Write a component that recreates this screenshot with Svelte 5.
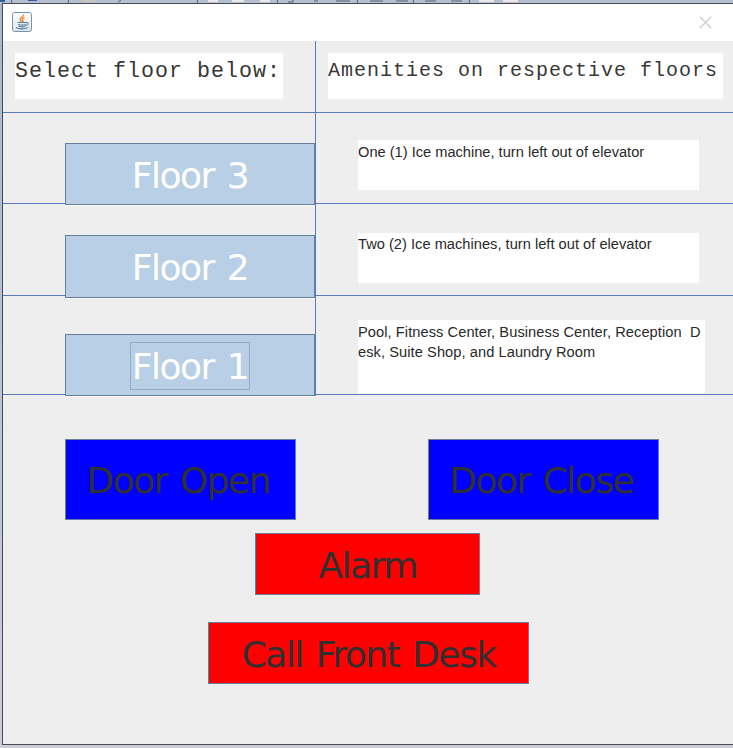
<script>
  const floors = [
    { name: 'Floor 3', key: 'three', text: 'One (1) Ice machine, turn left out of elevator' },
    { name: 'Floor 2', key: 'two', text: 'Two (2) Ice machines, turn left out of elevator' },
    { name: 'Floor 1', key: 'one', text: 'Pool, Fitness Center, Business Center, Reception  D\nesk, Suite Shop, and Laundry Room', focused: true }
  ];
</script>

<div class="desktop">
  <svg class="toolbar" width="733" height="3" viewBox="0 0 733 3" aria-hidden="true">
    <rect width="733" height="3" fill="#b4c0d0" />
    <path d="M0 0h5v2H0zM28 0h9v1h-9z" fill="#315b91" />
    <path d="M82 0h14v2H82z" fill="#c7c6bd" />
    <path d="M118 2l3-2M288 2h5M293 0v2M314 1h4M336 1h14M370 1h13M396 1h12M425 1h11M451 1h11" stroke="#596270" fill="none" />
    <path d="M11.500 0v3M68.500 0v3M197.500 0v3M277.500 0v3M357.500 0v3M413.500 0v3M469.500 0v3" stroke="#566275" />
    <path d="M208 0h10v2h-10zM232 0h12v2h-12zM260 0h10v2h-10zM479 0h15v2h-15zM503 0h15v2h-15z" fill="#eee9e9" />
  </svg>
  <div class="window">
    <header>
      <svg class="java" width="20" height="20" viewBox="0 0 20 20" aria-label="Java">
        <defs><linearGradient id="tile" x2="0" y2="1"><stop stop-color="#fff" /><stop offset="1" stop-color="#dce3e8" /></linearGradient></defs>
        <rect x=".5" y=".5" width="19" height="19" rx="2" fill="url(#tile)" stroke="#7593ad" />
        <path d="M11.500 2.500C12 5 7.500 5.500 8.200 7.500c.2 1 1.300 1.500 1 2.500M12.500 5.500c-2 .8-3 1.900-1.800 3 .7.700.2 1.300-.4 1.600" fill="none" stroke="#ed8b3b" stroke-width="1.500" />
        <path d="M5.500 10.500h8.500M6 12.500q4 1.200 7.500 0M6.500 14.300q3.500 1.200 6.500 0M4 15.800q6 2.200 12-.2M13.800 10.500q3-.2 2 1.700-.7 1-2.500 1.400" fill="none" stroke="#577f9d" stroke-width="1.100" />
      </svg>
      <svg class="close" width="13" height="13" viewBox="0 0 13 13" aria-label="Close"><path d="M.8.8l11.400 11.400M12.200.8L.8 12.200" stroke="#d2ccd3" stroke-width="1.400" /></svg>
    </header>
    <main>
      <section class="row headings">
        <div class="left"><div class="heading select">Select floor below:</div></div>
        <div class="right"><div class="heading amenities">Amenities on respective floors</div></div>
      </section>
      {#each floors as floor}
        <section class="row {floor.key}">
          <div class="left">
            <button class="floor"><span class:focused={floor.focused}>{floor.name}</span></button>
          </div>
          <div class="right"><div class="info">{floor.text}</div></div>
        </section>
      {/each}
      <div class="doors">
        <button class="door">Door Open</button>
        <button class="door">Door Close</button>
      </div>
      <button class="alarm">Alarm</button>
      <button class="desk">Call Front Desk</button>
    </main>
  </div>
</div>

<style>
  :global(body) { margin: 0; overflow: hidden; }
  * { box-sizing: border-box; }
  .desktop { width: 733px; height: 748px; padding-left: 2px; background: linear-gradient(#a8b8cc, #bdc6d4 60%, #cbced6); overflow: hidden; }
  .toolbar { display: block; margin-left: -2px; }
  .window { width: 731px; height: 742px; border: 1px solid #454a55; border-right: 0; background: #eeeeee; }
  header { height: 37px; padding: 8px 21px 0 9px; display: flex; justify-content: space-between; background: #fff; }
  .close { margin-top: 4px; }
  .row { display: grid; grid-template-columns: 313px 1fr; border-bottom: 1px solid #5b7cb9; }
  .left { border-right: 1px solid #5b7cb9; padding-left: 62px; }
  .right { padding-left: 42px; }
  .headings { height: 72px; }
  .headings .left, .headings .right { padding: 12px 0 0 12px; }
  .heading { height: 46px; background: #fff; color: #383838; font-family: "Liberation Mono", "Courier New", monospace; white-space: pre; }
  .select { width: 268px; font-size: 21.670px; letter-spacing: 1px; line-height: 38px; }
  .amenities { width: 395px; font-size: 20px; letter-spacing: 1px; line-height: 36px; }
  .three { height: 91px; }
  .two { height: 92px; }
  .one { height: 99px; }
  button { display: flex; align-items: center; justify-content: center; padding: 0; border: 1px solid #687f9c; border-radius: 0; color: #303030; font: 36px/48px "DejaVu Sans", sans-serif; letter-spacing: -1.5px; word-spacing: 3px; white-space: nowrap; }
  .floor { position: relative; z-index: 1; width: 250px; height: 62px; margin-top: 30px; background: #b8cfe5; color: #fff; box-shadow: 0 1px #fafafa; padding-top: 2px; }
  .two .floor { height: 63px; margin-top: 31px; }
  .one .floor { margin-top: 38px; }
  .floor span { display: flex; justify-content: center; align-items: center; width: 120px; height: 48px; padding-top: 1px; border: 1px solid transparent; }
  .floor .focused { border-color: #94abc9; padding-top: 2px; }
  .info { width: 341px; height: 50px; margin-top: 27px; padding-top: 2px; background: #fff; color: #292929; font: 14.630px/20px "Liberation Sans", Arial, sans-serif; white-space: pre; }
  .two .info { margin-top: 29px; padding-top: 1px; letter-spacing: .02px; }
  .one .info { width: 347px; height: 73px; margin-top: 24px; letter-spacing: .07px; }
  .doors { display: flex; gap: 132px; padding: 44px 0 0 62px; }
  .door { width: 231px; height: 81px; background: #00f; padding: 2px 5px 0 0; }
  .alarm, .desk { height: 62px; background: #f00; padding-top: 3px; }
  .alarm { width: 225px; margin: 13px 0 0 252px; }
  .desk { width: 321px; margin: 27px 0 0 205px; }
</style>
